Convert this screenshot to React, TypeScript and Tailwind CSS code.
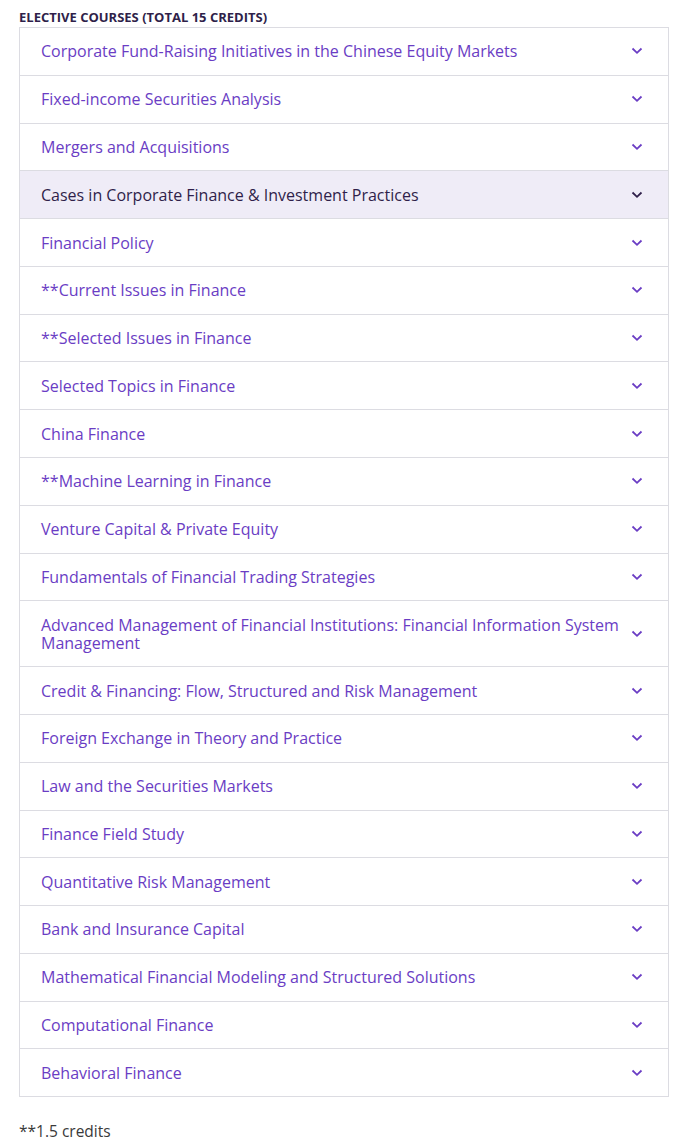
import React from "react";

const courses = [
  "Corporate Fund-Raising Initiatives in the Chinese Equity Markets",
  "Fixed-income Securities Analysis",
  "Mergers and Acquisitions",
  "Cases in Corporate Finance & Investment Practices",
  "Financial Policy",
  "**Current Issues in Finance",
  "**Selected Issues in Finance",
  "Selected Topics in Finance",
  "China Finance",
  "**Machine Learning in Finance",
  "Venture Capital & Private Equity",
  "Fundamentals of Financial Trading Strategies",
  "Advanced Management of Financial Institutions: Financial Information System Management",
  "Credit & Financing: Flow, Structured and Risk Management",
  "Foreign Exchange in Theory and Practice",
  "Law and the Securities Markets",
  "Finance Field Study",
  "Quantitative Risk Management",
  "Bank and Insurance Capital",
  "Mathematical Financial Modeling and Structured Solutions",
  "Computational Finance",
  "Behavioral Finance",
];

const Chevron = ({ dark }: { dark?: boolean }) => (
  <svg width="12" height="8" viewBox="0 0 12 8" className="shrink-0">
    <path
      d="M1.5 1.5 L6 5.8 L10.5 1.5"
      fill="none"
      stroke={dark ? "#2f1f4a" : "#6a3dc4"}
      strokeWidth="1.8"
    />
  </svg>
);

export default function App() {
  return (
    <div className="bg-white min-h-screen px-[19px] pt-[10px]" style={{ fontFamily: '"Open Sans", sans-serif' }}>
      <h3 className="text-[13px] font-bold uppercase text-[#2f1f4a] leading-[14px]">
        Elective Courses (Total 15 Credits)
      </h3>
      <div className="mt-[3px] border border-[#dcdce2] w-[650px]">
        {courses.map((c, i) => {
          const active = i === 3;
          return (
            <div
              key={c}
              className={`flex items-center justify-between pl-[21px] pr-[25px] py-[14.4px] ${
                i > 0 ? "border-t border-[#dcdce2]" : ""
              } ${active ? "bg-[#efecf7] text-[#2f1f4a]" : "text-[#6a3dc4]"}`}
            >
              <span className="text-[16px] leading-[18px] pr-2">{c}</span>
              <Chevron dark={active} />
            </div>
          );
        })}
      </div>
      <p className="mt-[25px] text-[15.5px] leading-[18px] text-[#3a3a3a]">**1.5 credits</p>
    </div>
  );
}
